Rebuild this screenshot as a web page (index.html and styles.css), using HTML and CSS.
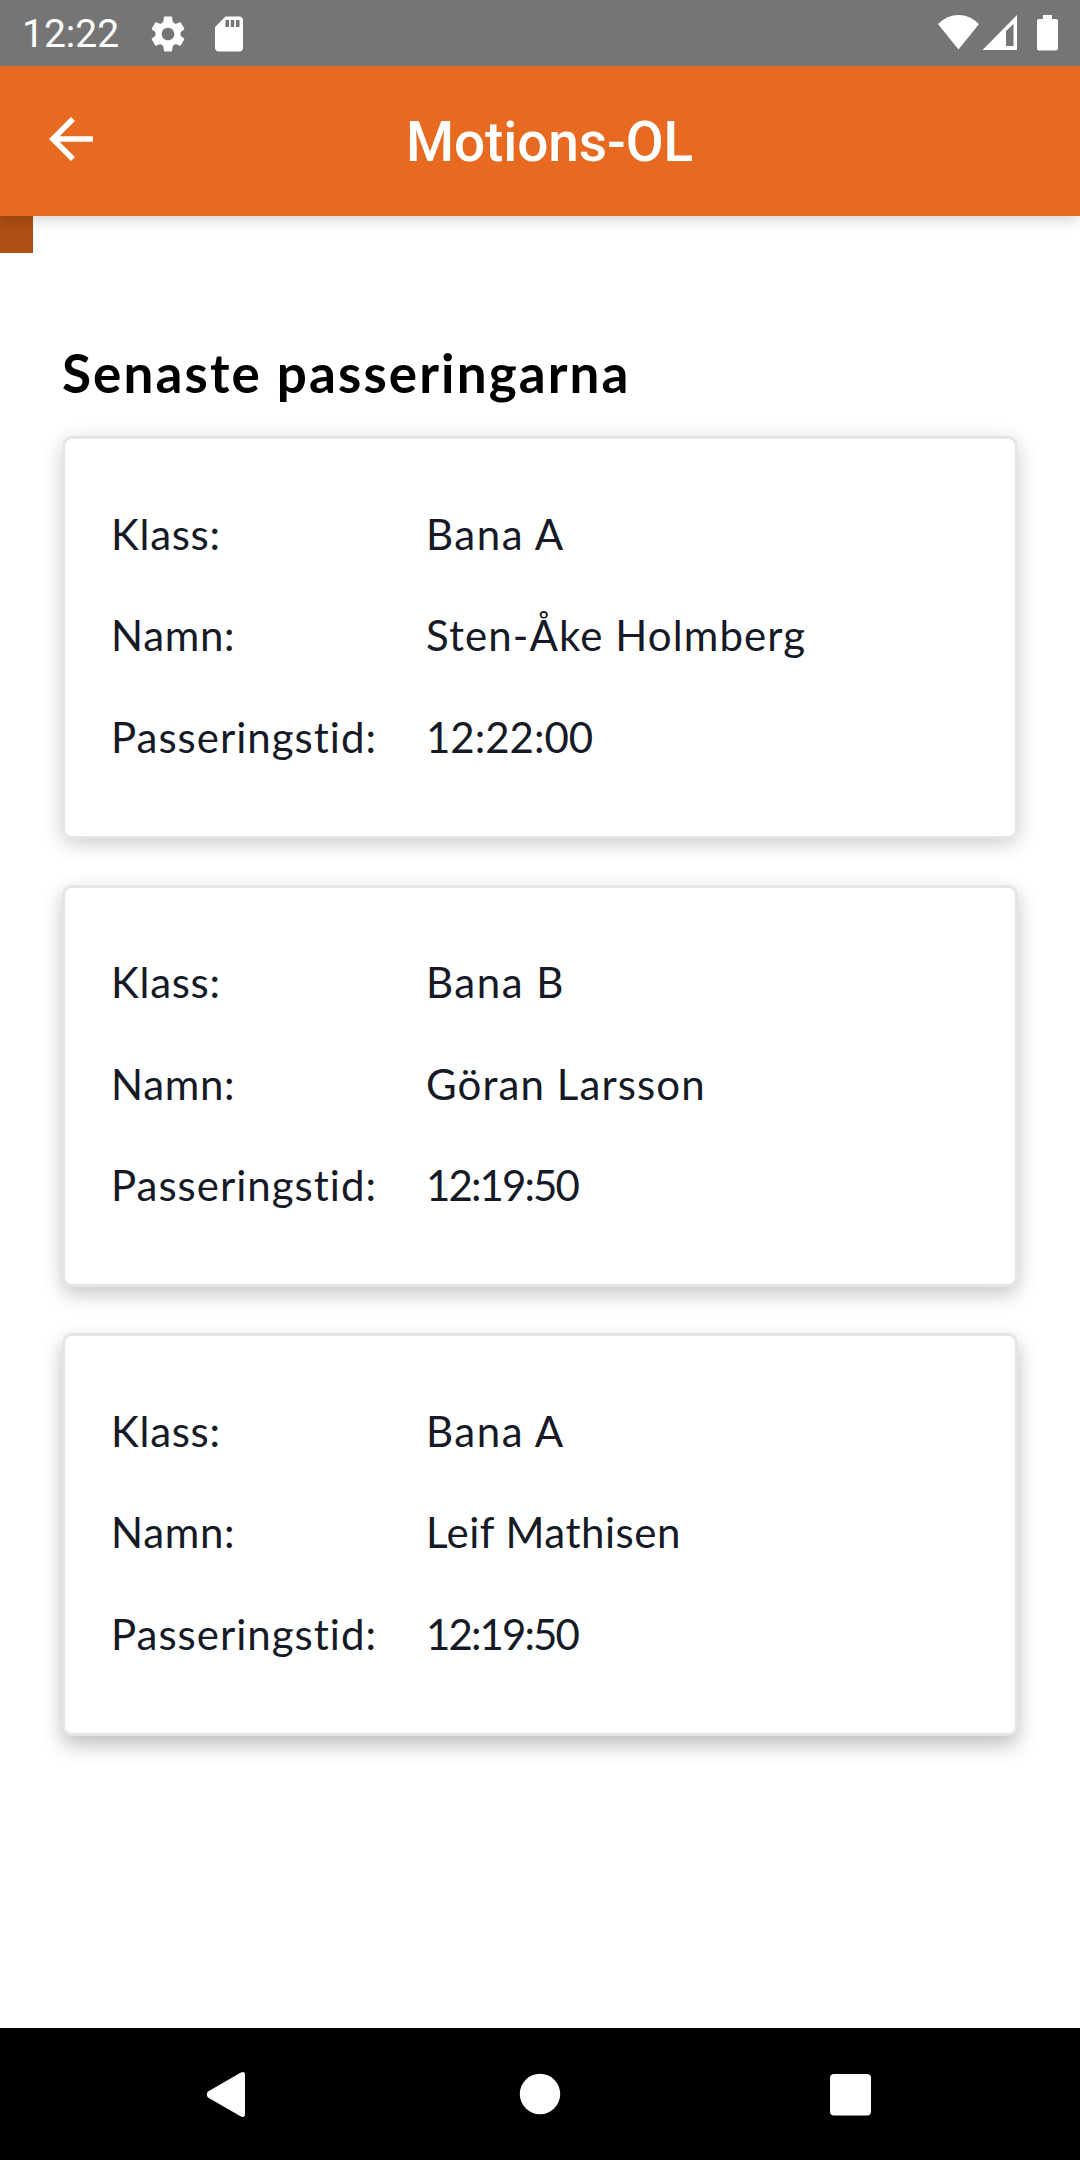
FILE: index.html
```html
<!DOCTYPE html>
<html lang="sv">
<head>
<meta charset="utf-8">
<title>Motions-OL</title>
<link rel="stylesheet" href="styles.css">
</head>
<body>
<div class="status">
  <span class="clock">12:22</span>
  <svg class="s-gear" width="42" height="42" viewBox="0 0 24 24"><path fill="#fff" d="M19.14 12.94c.04-.3.06-.61.06-.94s-.02-.64-.07-.94l2.03-1.58c.18-.14.23-.41.12-.61l-1.92-3.32c-.12-.22-.37-.29-.59-.22l-2.39.96c-.5-.38-1.03-.7-1.62-.94L14.4 2.81c-.04-.24-.24-.81-.48-.81h-3.84c-.24 0-.43.57-.47.81L9.25 5.35c-.59.24-1.13.57-1.62.94l-2.39-.96c-.22-.08-.47 0-.59.22L2.740 8.870c-.12.21-.08.47.12.61l2.030 1.580c-.05.3-.09.63-.09.94s.02.64.07.94l-2.030 1.580c-.18.14-.23.41-.12.61l1.920 3.320c.12.22.37.29.59.22l2.390-.96c.5.38 1.030.7 1.620.94l.36 2.540c.05.24.24.81.48.81h3.840c.24 0 .44-.57.47-.81l.36-2.540c.59-.24 1.130-.56 1.620-.94l2.390.96c.22.08.47 0 .59-.22l1.920-3.320c.12-.22.07-.47-.12-.61zM12 15.600c-1.980 0-3.600-1.620-3.600-3.600s1.620-3.600 3.600-3.600 3.600 1.620 3.600 3.600-1.620 3.600-3.600 3.600z"/></svg>
  <svg class="s-sd" width="42" height="42" viewBox="0 0 24 24"><path fill="#fff" d="M18 2h-8L4 8v12c0 1.100.9 2 2 2h12c1.100 0 2-.9 2-2V4c0-1.100-.9-2-2-2zm-6 6h-2V4h2zm3 0h-2V4h2zm3 0h-2V4h2z"/></svg>
  <svg class="s-right" width="124" height="40" viewBox="0 0 124 40"><g fill="#fff"><path d="M0 11Q9 2 20.500 2T41 11L20.500 36.500z"/><path fill-rule="evenodd" d="M79 2v35H44.500zM75.500 11L68 18v15h7.500z"/><path d="M105 2h9v4h4q2 0 2 2v27.500q0 2-2 2h-17q-2 0-2-2V8q0-2 2-2h4z"/></g></svg>
</div>
<header class="bar">
  <svg class="back" width="66" height="66" viewBox="0 0 24 24"><path fill="#fff" d="M20 11H7.830l5.590-5.590L12 4l-8 8 8 8 1.410-1.410L7.830 13H20z"/></svg>
  <h1 class="title">Motions-OL</h1>
</header>
<main class="content">
  <div class="progress"></div>
  <h2 class="heading">Senaste passeringarna</h2>
  <section class="card">
    <div class="row"><span class="label">Klass:</span><span class="course">Bana A</span></div>
    <div class="row"><span class="label">Namn:</span><span class="name">Sten-Åke Holmberg</span></div>
    <div class="row"><span class="label label-wide">Passeringstid:</span><span class="time">12:22:00</span></div>
  </section>
  <section class="card card-mid">
    <div class="row"><span class="label">Klass:</span><span class="course">Bana B</span></div>
    <div class="row"><span class="label">Namn:</span><span class="name">Göran Larsson</span></div>
    <div class="row"><span class="label label-wide">Passeringstid:</span><span class="time time-narrow">12:19:50</span></div>
  </section>
  <section class="card card-low">
    <div class="row"><span class="label">Klass:</span><span class="course">Bana A</span></div>
    <div class="row"><span class="label">Namn:</span><span class="name name-tight">Leif Mathisen</span></div>
    <div class="row"><span class="label label-wide">Passeringstid:</span><span class="time time-narrow">12:19:50</span></div>
  </section>
</main>
<nav class="nav">
  <svg width="1080" height="132" viewBox="0 0 1080 132"><g fill="#fff"><path d="M208 63.500L240.500 44.700Q245 42.800 245 47V86Q245 90.200 240.500 88.300L208 69.500Q205.500 66.500 208 63.500z"/><circle cx="540" cy="66" r="20.200"/><rect x="830" y="46" width="41" height="41.500" rx="4"/></g></svg>
</nav>
</body>
</html>
```
FILE: styles.css
```css
* { box-sizing: border-box; }
body {
  margin: 0;
  width: 1080px;
  height: 2160px;
  display: flex;
  flex-direction: column;
  background: #fff;
  font-family: Lato, sans-serif;
  color: #151a26;
  overflow: hidden;
}
svg { display: block; flex: none; }

/* Status bar */
.status {
  height: 66px;
  flex: none;
  position: relative;
  z-index: 2;
  background: #757575;
  display: flex;
  align-items: flex-start;
  padding: 0 18px 0 22px;
  font-family: Roboto, sans-serif;
  color: #fff;
}
.clock { font-size: 39px; line-height: 69px; width: 125px; }
.s-gear { margin-top: 12.5px; }
.s-sd { margin: 12.5px 0 0 19px; }
.s-right { margin: 13px 0 0 auto; }

/* App bar */
.bar {
  height: 150px;
  flex: none;
  background: #e86a20;
  display: flex;
  align-items: center;
  padding-left: 38px;
  position: relative;
  z-index: 1;
  box-shadow: 0 3px 14px rgba(0, 0, 0, .2);
}
.back { margin-top: -4px; }
.title {
  margin: 0 0 0 302px;
  padding-top: 2px;
  font: 500 55px/72px Roboto, sans-serif;
  letter-spacing: -.1px;
  color: #fff;
  white-space: nowrap;
}

/* Content */
.content { flex: 1; min-height: 0; }
.progress { width: 33px; height: 37px; background: #b05014; }
.heading {
  margin: 85px 62px 29px;
  font-size: 53px;
  line-height: 69px;
  font-weight: 700;
  letter-spacing: 2.1px;
  color: #000;
  white-space: nowrap;
}
.card {
  margin: 0 62px 46px;
  height: 402.6px;
  border: 3px solid #e5e5e5;
  border-radius: 10px;
  background: #fff;
  padding: 44.5px 46px 0;
  box-shadow: 0 5px 20px rgba(0, 0, 0, .2);
}
.card-mid { box-shadow: 0 7px 20px rgba(0, 0, 0, .23); }
.card-low { box-shadow: 0 9px 20px rgba(0, 0, 0, .26); }
.row {
  display: grid;
  grid-template-columns: 315px 1fr;
  height: 101.5px;
  line-height: 101.5px;
  font-size: 42px;
  white-space: nowrap;
}
.label { letter-spacing: .7px; }
.label-wide { letter-spacing: 1px; }
.course { letter-spacing: 1.5px; }
.name { letter-spacing: 1.1px; }
.name-tight { letter-spacing: .5px; }
.time-narrow { letter-spacing: -1.9px; }

/* System navigation */
.nav { height: 132px; flex: none; background: #000; }
```
